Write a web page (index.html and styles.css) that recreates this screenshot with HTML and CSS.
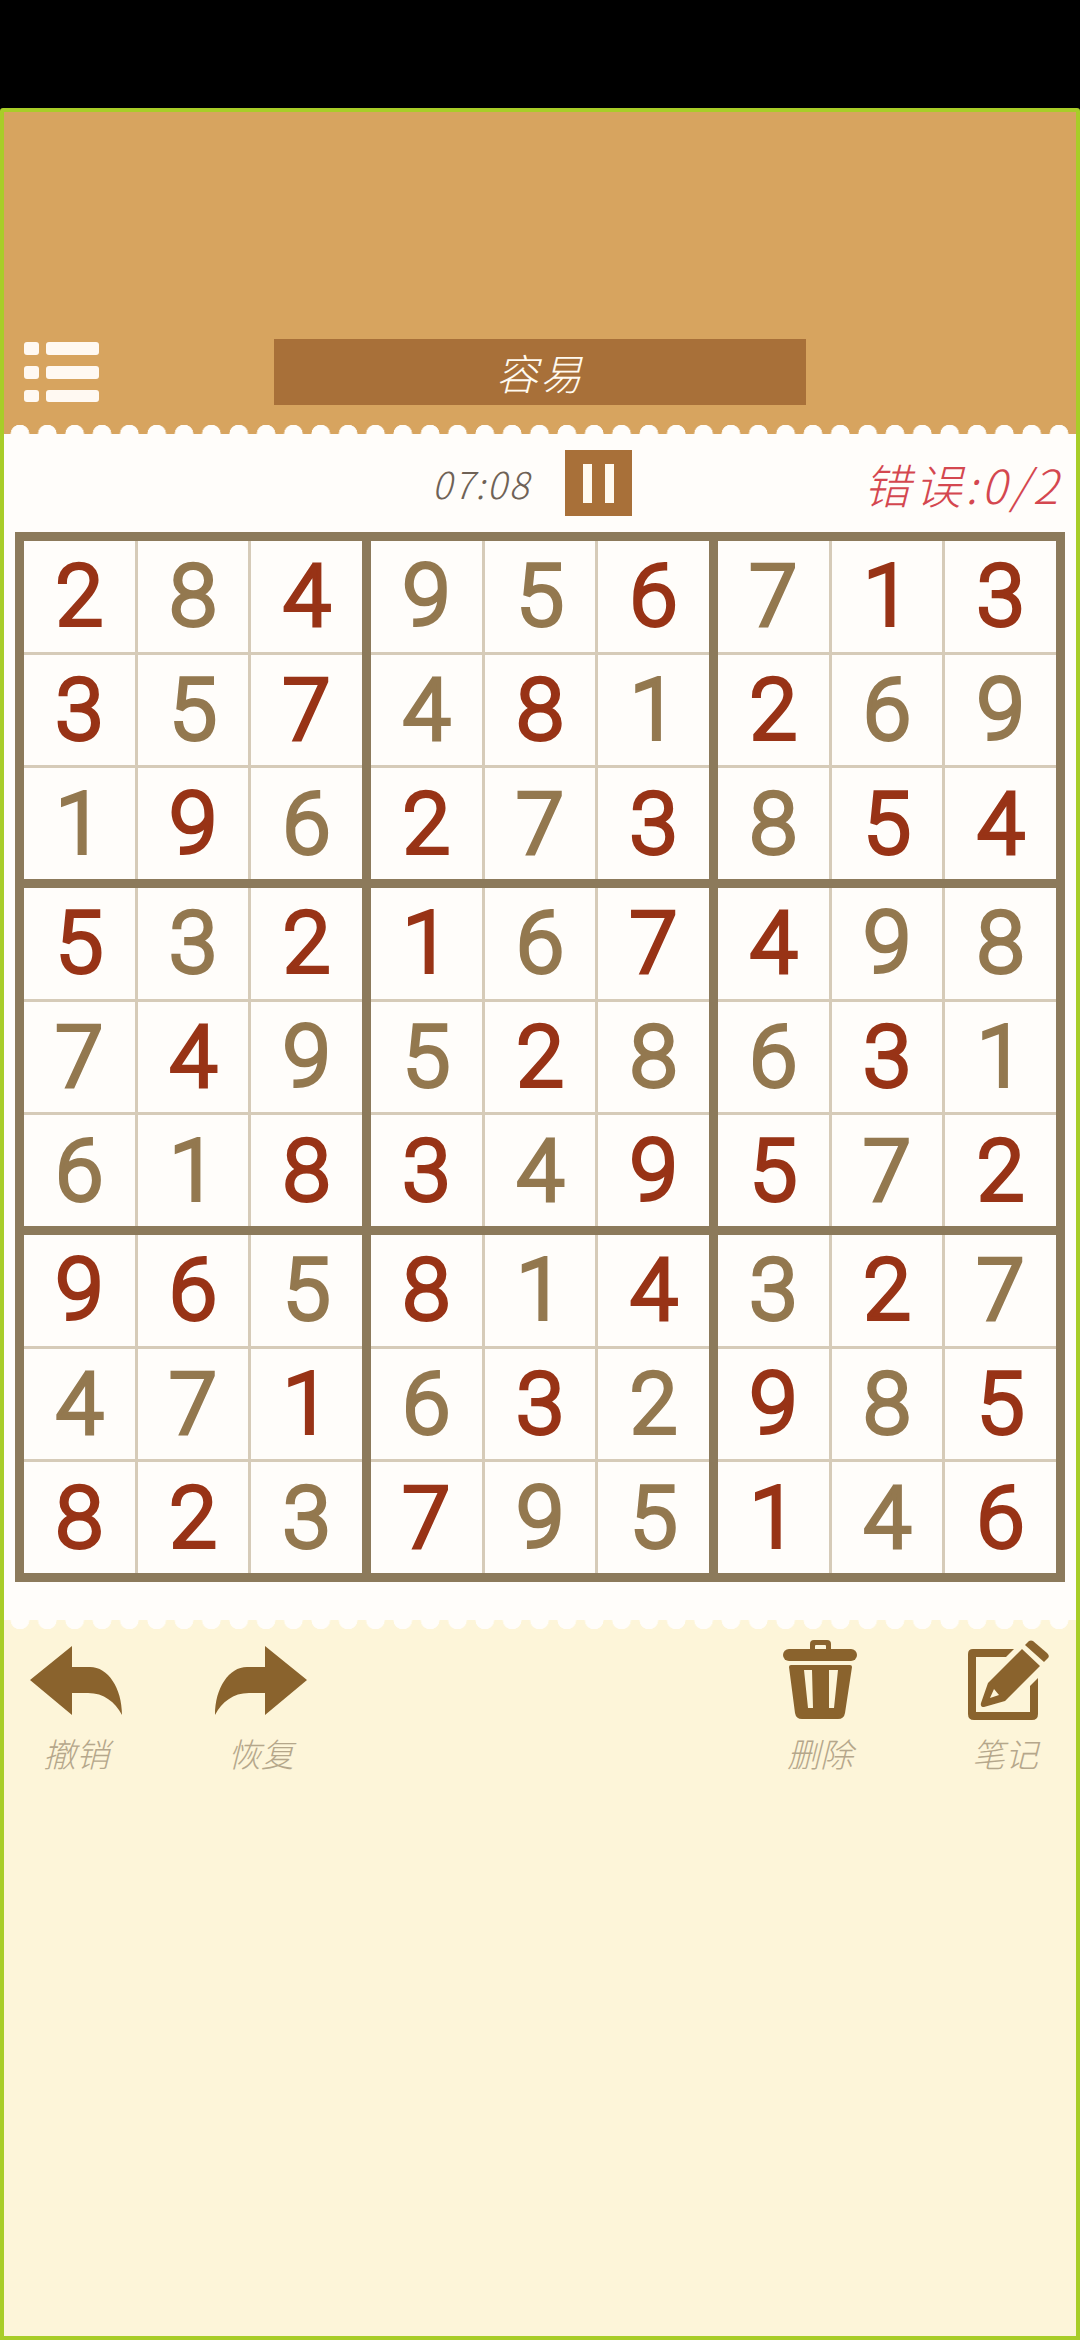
FILE: index.html
```html
<!DOCTYPE html>
<html lang="zh">
<head>
    <meta charset="UTF-8">
    <meta name="viewport" content="width=device-width, initial-scale=1.0">
    <title>数独</title>
    <link rel="stylesheet" href="styles.css">
</head>
<body>
    <div class="screen">
        <header class="top">
            <div class="top-row">
                <svg class="menu-icon" width="75" height="60" viewBox="0 0 75 60">
                    <rect x="0" y="0" width="15" height="13" rx="3"/>
                    <rect x="22" y="0" width="53" height="13" rx="3"/>
                    <rect x="0" y="24" width="15" height="13" rx="3"/>
                    <rect x="22" y="24" width="53" height="13" rx="3"/>
                    <rect x="0" y="48" width="15" height="12" rx="3"/>
                    <rect x="22" y="48" width="53" height="12" rx="3"/>
                </svg>
                <div class="level">容易</div>
            </div>
            <div class="scallop scallop-up"></div>
        </header>

        <main class="paper">
            <div class="status">
                <span class="timer">07:08</span>
                <div class="pause"><i></i><i></i></div>
                <span class="errors">错误:0/2</span>
            </div>

            <div class="board">
                <div class="box">
                    <div class="cell given">2</div><div class="cell">8</div><div class="cell given">4</div>
                    <div class="cell given">3</div><div class="cell">5</div><div class="cell given">7</div>
                    <div class="cell">1</div><div class="cell given">9</div><div class="cell">6</div>
                </div>
                <div class="box">
                    <div class="cell">9</div><div class="cell">5</div><div class="cell given">6</div>
                    <div class="cell">4</div><div class="cell given">8</div><div class="cell">1</div>
                    <div class="cell given">2</div><div class="cell">7</div><div class="cell given">3</div>
                </div>
                <div class="box">
                    <div class="cell">7</div><div class="cell given">1</div><div class="cell given">3</div>
                    <div class="cell given">2</div><div class="cell">6</div><div class="cell">9</div>
                    <div class="cell">8</div><div class="cell given">5</div><div class="cell given">4</div>
                </div>
                <div class="box">
                    <div class="cell given">5</div><div class="cell">3</div><div class="cell given">2</div>
                    <div class="cell">7</div><div class="cell given">4</div><div class="cell">9</div>
                    <div class="cell">6</div><div class="cell">1</div><div class="cell given">8</div>
                </div>
                <div class="box">
                    <div class="cell given">1</div><div class="cell">6</div><div class="cell given">7</div>
                    <div class="cell">5</div><div class="cell given">2</div><div class="cell">8</div>
                    <div class="cell given">3</div><div class="cell">4</div><div class="cell given">9</div>
                </div>
                <div class="box">
                    <div class="cell given">4</div><div class="cell">9</div><div class="cell">8</div>
                    <div class="cell">6</div><div class="cell given">3</div><div class="cell">1</div>
                    <div class="cell given">5</div><div class="cell">7</div><div class="cell given">2</div>
                </div>
                <div class="box">
                    <div class="cell given">9</div><div class="cell given">6</div><div class="cell">5</div>
                    <div class="cell">4</div><div class="cell">7</div><div class="cell given">1</div>
                    <div class="cell given">8</div><div class="cell given">2</div><div class="cell">3</div>
                </div>
                <div class="box">
                    <div class="cell given">8</div><div class="cell">1</div><div class="cell given">4</div>
                    <div class="cell">6</div><div class="cell given">3</div><div class="cell">2</div>
                    <div class="cell given">7</div><div class="cell">9</div><div class="cell">5</div>
                </div>
                <div class="box">
                    <div class="cell">3</div><div class="cell given">2</div><div class="cell">7</div>
                    <div class="cell given">9</div><div class="cell">8</div><div class="cell given">5</div>
                    <div class="cell given">1</div><div class="cell">4</div><div class="cell given">6</div>
                </div>
            </div>
        </main>

        <section class="bottom">
            <div class="scallop scallop-down"></div>
            <div class="tools">
                <div class="tool-group">
                    <div class="tool">
                        <svg width="92" height="80" viewBox="0 -6 92 80"><path d="M0 34 L42 0 V21 H60 C78 21 92 42 92 69 C85 56 74 47 58 47 H42 V69 Z"/></svg>
                        <span>撤销</span>
                    </div>
                    <div class="tool">
                        <svg width="92" height="80" viewBox="0 -6 92 80"><path transform="translate(92 0) scale(-1 1)" d="M0 34 L42 0 V21 H60 C78 21 92 42 92 69 C85 56 74 47 58 47 H42 V69 Z"/></svg>
                        <span>恢复</span>
                    </div>
                </div>
                <div class="tool-group">
                    <div class="tool">
                        <svg width="74" height="80" viewBox="0 0 74 80">
                            <path fill-rule="evenodd" d="M27 9 V4 Q27 0 31 0 H44 Q48 0 48 4 V9 H43 V6 Q43 5 42 5 H33 Q32 5 32 6 V9 Z"/>
                            <rect x="0" y="9" width="74" height="12" rx="6"/>
                            <path fill-rule="evenodd" d="M8 25 H67 Q69 25 69 27 L62 73 Q61 79 55 79 H19 Q13 79 12 73 L6 27 Q6 25 8 25 Z M21 30 L25 68 H30 L29 30 Z M46 30 L46 68 H51 L55 30 Z"/>
                        </svg>
                        <span>删除</span>
                    </div>
                    <div class="tool">
                        <svg class="note-icon" width="82" height="80" viewBox="0 0 82 80">
                            <path d="M5 9 H46 L38 17 H8 V72 H62 V46 L70 38 V74 Q70 80 64 80 H6 Q0 80 0 74 V14 Q0 9 5 9 Z"/>
                            <path fill-rule="evenodd" d="M20 43 L54 9 L72 26 L37 61 L16 67 Q12 67 13 63 Z M22 58 L31 55 L26 49 Z"/>
                            <path d="M57 5 L61 1 Q63 0 65 1 L79 13 Q82 16 80 18 L76 22 Z"/>
                        </svg>
                        <span>笔记</span>
                    </div>
                </div>
            </div>
        </section>
    </div>
</body>
</html>
```

FILE: styles.css
```css
html, body {
    margin: 0;
    padding: 0;
    height: 100%;
    overflow: hidden;
}

body {
    background: #000;
    font-family: "Noto Sans CJK SC", "Noto Sans", sans-serif;
    display: flex;
    flex-direction: column;
    padding-top: 108px;
    box-sizing: border-box;
}

.screen {
    flex: 1;
    display: flex;
    flex-direction: column;
    border: 4px solid #a8cd28;
    border-radius: 3px 3px 0 0;
}

/* header */
.top {
    background: #d7a45f;
    height: 322px;
    display: flex;
    flex-direction: column;
    justify-content: flex-end;
}

.top-row {
    display: flex;
    align-items: center;
    padding: 0 0 20px 20px;
}

.menu-icon {
    fill: #fff9f2;
    margin-right: 175px;
}

.level {
    width: 532px;
    height: 66px;
    background: #a87039;
    color: #fffaf0;
    font-size: 42px;
    font-weight: 300;
    font-style: italic;
    line-height: 66px;
    text-align: center;
    letter-spacing: 2px;
}

.scallop {
    height: 9px;
    background-size: 27.35px 9px;
    background-repeat: repeat-x;
    background-position: 2.3px 0;
}

.scallop-up {
    background-image: radial-gradient(circle at 50% 100%, #fffdfa 9px, transparent 9.6px);
}

.scallop-down {
    background-image: radial-gradient(circle at 50% 0, #fffdfa 9px, transparent 9.6px);
}

/* paper */
.paper {
    background: #fffdfa;
    padding: 0 11px 38px;
}

.status {
    height: 98px;
    display: flex;
    align-items: center;
    padding-left: 417px;
    padding-right: 3px;
}

.timer {
    width: 133px;
    color: #6f6256;
    font-size: 37px;
    font-weight: 300;
    font-style: italic;
    letter-spacing: 2px;
}

.pause {
    width: 67px;
    height: 66px;
    background: #a87039;
    display: flex;
    justify-content: center;
    align-items: center;
    gap: 13px;
}

.pause i {
    width: 9px;
    height: 39px;
    background: #fffaf0;
}

.errors {
    margin-left: auto;
    color: #d4474f;
    font-size: 47px;
    font-weight: 300;
    font-style: italic;
    letter-spacing: 4px;
}

/* board */
.board {
    height: 1050px;
    box-sizing: border-box;
    padding: 9px;
    background: #8c7a5b;
    display: grid;
    grid-template-columns: repeat(3, 1fr);
    grid-template-rows: repeat(3, 1fr);
    gap: 9px;
}

.box {
    background: #d6cbb8;
    display: grid;
    grid-template-columns: repeat(3, 1fr);
    grid-template-rows: repeat(3, 1fr);
    gap: 3px;
}

.cell {
    background: #fffdfa;
    display: flex;
    align-items: center;
    justify-content: center;
    font-family: Roboto, sans-serif;
    font-size: 86px;
    font-weight: 300;
    line-height: 1;
    color: #93784f;
    -webkit-text-stroke: 4px #93784f;
}

.cell.given {
    color: #983316;
    -webkit-text-stroke: 4px #983316;
}

/* bottom tools */
.bottom {
    flex: 1;
    background: #fdf5d9;
}

.tools {
    display: flex;
    justify-content: space-between;
    padding: 11px 16px 0 17px;
}

.tool-group {
    display: flex;
    gap: 75px;
}

.tool {
    width: 110px;
    display: flex;
    flex-direction: column;
    align-items: center;
    fill: #8a632d;
}

.note-icon {
    margin-left: 8px;
}

.tool span {
    margin-top: 11px;
    color: #b5a78b;
    font-size: 33px;
    font-weight: 300;
    font-style: italic;
    line-height: 44px;
}
```
